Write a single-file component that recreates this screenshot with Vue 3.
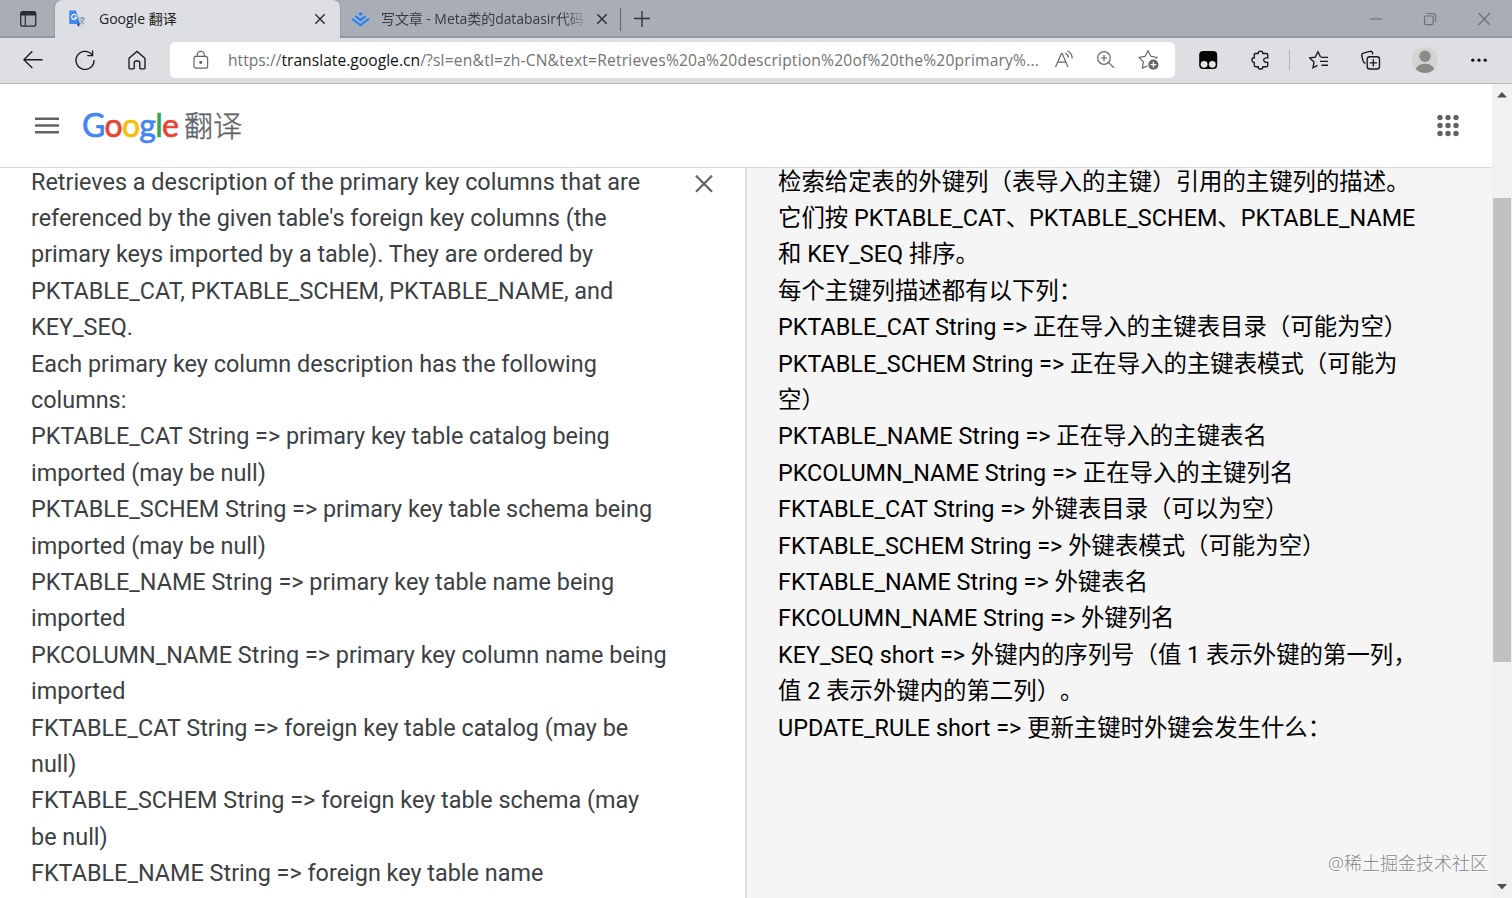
<script setup>
import { ref } from "vue";

const tabs = ref([
  { id: 1, title: "Google 翻译", active: true },
  { id: 2, title: "写文章 - Meta类的databasir代码", active: false },
]);

const logo = [
  { char: "G", color: "blue" },
  { char: "o", color: "red" },
  { char: "o", color: "yellow" },
  { char: "g", color: "blue" },
  { char: "l", color: "green" },
  { char: "e", color: "red" },
];

const sourceLines = ref([
  "Retrieves a description of the primary key columns that are",
  "referenced by the given table's foreign key columns (the",
  "primary keys imported by a table). They are ordered by",
  "PKTABLE_CAT, PKTABLE_SCHEM, PKTABLE_NAME, and",
  "KEY_SEQ.",
  "Each primary key column description has the following",
  "columns:",
  "PKTABLE_CAT String => primary key table catalog being",
  "imported (may be null)",
  "PKTABLE_SCHEM String => primary key table schema being",
  "imported (may be null)",
  "PKTABLE_NAME String => primary key table name being",
  "imported",
  "PKCOLUMN_NAME String => primary key column name being",
  "imported",
  "FKTABLE_CAT String => foreign key table catalog (may be",
  "null)",
  "FKTABLE_SCHEM String => foreign key table schema (may",
  "be null)",
  "FKTABLE_NAME String => foreign key table name",
]);

const targetLines = ref([
  "检索给定表的外键列（表导入的主键）引用的主键列的描述。",
  "它们按 PKTABLE_CAT、PKTABLE_SCHEM、PKTABLE_NAME",
  "和 KEY_SEQ 排序。",
  "每个主键列描述都有以下列：",
  "PKTABLE_CAT String => 正在导入的主键表目录（可能为空）",
  "PKTABLE_SCHEM String => 正在导入的主键表模式（可能为",
  "空）",
  "PKTABLE_NAME String => 正在导入的主键表名",
  "PKCOLUMN_NAME String => 正在导入的主键列名",
  "FKTABLE_CAT String => 外键表目录（可以为空）",
  "FKTABLE_SCHEM String => 外键表模式（可能为空）",
  "FKTABLE_NAME String => 外键表名",
  "FKCOLUMN_NAME String => 外键列名",
  "KEY_SEQ short => 外键内的序列号（值 1 表示外键的第一列，",
  "值 2 表示外键内的第二列）。",
  "UPDATE_RULE short => 更新主键时外键会发生什么：",
]);
</script>

<template>
  <div class="browser">
    <!-- Tabs -->
    <div class="tab-strip">
      <div class="tab-actions">
        <svg width="18" height="18" viewBox="0 0 18 18">
          <rect x="1.7" y="1.6" width="15" height="14.6" rx="2" fill="none" stroke="#2b2d31" stroke-width="1.3" />
          <path d="M1.7 5.4V3.6a2 2 0 0 1 2-2h11a2 2 0 0 1 2 2v1.8z" fill="#2b2d31" />
          <path d="M6.3 5v11" stroke="#2b2d31" stroke-width="1.2" />
        </svg>
      </div>
      <div v-for="tab in tabs" :key="tab.id" class="tab" :class="{ active: tab.active }">
        <svg v-if="tab.active" class="favicon" width="18" height="18" viewBox="0 0 18 18">
          <path d="M7 5h9.2a1 1 0 0 1 1 1v10.2a1 1 0 0 1-1 1H11z" fill="#d5d9e0" />
          <path d="M11.5 8.3h5M14 7v1.3m2 0c-.5 2.5-2 4.3-3.8 5.4m.2-3.6c.7 1.6 2 3 3.6 3.8" fill="none" stroke="#77818f" stroke-width=".9" />
          <path d="M2.2.5h5.6l4.4 13.5H2.2a1 1 0 0 1-1-1V1.5a1 1 0 0 1 1-1z" fill="#4285f4" />
          <path d="M8.6 13.5h3.6l-1.8 3.4z" fill="#4a3cae" />
          <path d="M8.3 5.6A2.5 2.5 0 1 0 8.6 7.3H6.4" fill="none" stroke="#fff" stroke-width="1.2" />
        </svg>
        <svg v-else class="favicon" width="20" height="18" viewBox="0 0 20 18">
          <path d="M9.5 2.1l2.3 1.8-2.3 1.8-2.3-1.8z" fill="#1e80ff" />
          <path d="M4.5 6.1l5 4 5-4M1.1 8.8l8.4 6.5 8.4-6.5" fill="none" stroke="#1e80ff" stroke-width="2" />
        </svg>
        <span class="tab-title">{{ tab.title }}</span>
        <svg class="tab-close" width="12" height="12" viewBox="0 0 12 12">
          <path d="M1.3 1.3l9.4 9.4M10.7 1.3l-9.4 9.4" stroke="currentColor" stroke-width="1.4" />
        </svg>
      </div>
      <div class="new-tab">
        <svg width="16" height="16" viewBox="0 0 16 16">
          <path d="M8 0v16M0 7.5h16" stroke="#303338" stroke-width="1.3" />
        </svg>
      </div>
      <div class="window-controls">
        <svg width="14" height="14" viewBox="0 0 14 14"><path d="M1 7h12" /></svg>
        <svg width="14" height="14" viewBox="0 0 14 14">
          <rect x="1.5" y="4" width="8.6" height="8.6" rx="1.4" />
          <path d="M4 1.5h6a2.5 2.5 0 0 1 2.5 2.5v6" />
        </svg>
        <svg width="14" height="14" viewBox="0 0 14 14"><path d="M1.5 1l11.5 12M13 1L1.5 13" /></svg>
      </div>
    </div>

    <!-- Toolbar -->
    <div class="toolbar">
      <div class="nav">
        <svg width="20" height="20" viewBox="0 0 20 20">
          <path d="M19.5 9.7H1M9.3 1.3L.9 9.7l8.4 8.4" />
        </svg>
        <svg width="20" height="20" viewBox="0 0 20 20">
          <path d="M17 4.7A9 9 0 1 0 19 10M17.6.6v5h-5.4" />
        </svg>
        <svg width="20" height="20" viewBox="0 0 20 20">
          <path d="M2 8.2L10 1.4l8 6.8V18a.8.8 0 0 1-.8.8h-3.6a.8.8 0 0 1-.8-.8v-5a2 2 0 0 0-2-2h-1.6a2 2 0 0 0-2 2v5a.8.8 0 0 1-.8.8H2.8A.8.8 0 0 1 2 18z" />
        </svg>
      </div>
      <div class="address">
        <svg class="lock" width="16" height="20" viewBox="0 0 16 20">
          <rect x="1" y="6.4" width="13.6" height="11.8" rx="2" />
          <path d="M4.2 6.2V5a3.6 3.6 0 0 1 7.2 0v1.2" />
          <circle cx="7.8" cy="12.3" r="1" fill="#666" />
        </svg>
        <div class="url">https://<b>translate.google.cn</b><span>/?sl=en&amp;tl=zh-CN&amp;text=Retrieves%20a%20description%20of%20the%20primary%...</span></div>
        <svg class="read" width="20" height="20" viewBox="0 0 20 20">
          <path d="M1.5 17L7.4 3.5h.8L14 17M3.6 12.2h8.3M11.5 3.1c1.7 1 2.7 2.4 2.8 4.5M13.3.8c3 1.5 4.8 4 4.9 7.6" />
        </svg>
        <svg class="zoom" width="20" height="20" viewBox="0 0 20 20">
          <circle cx="8" cy="8" r="6.3" />
          <path d="M12.6 12.6l5.3 5.2M8 4.8v6.4M4.8 8h6.4" />
        </svg>
        <svg class="fav" width="22" height="22" viewBox="0 0 22 22">
          <path d="M9.4 17l-4.9 2 .8-6.1L1.2 8.3l6-1L10 1.7l2.9 5.6 6 1-1.2 1.3" />
          <circle cx="15.4" cy="15.7" r="5.1" fill="#666" stroke="none" />
          <path d="M15.4 12.8v5.8M12.5 15.7h5.8" stroke="#fff" />
        </svg>
      </div>
      <div class="extensions">
        <svg class="i-monkey" width="20" height="20" viewBox="0 0 20 20">
          <rect x="1.2" y="1" width="18" height="18" rx="4" fill="#050505" stroke="none" />
          <circle cx="6.1" cy="14.3" r="3.4" fill="#e2e4e6" stroke="none" />
          <circle cx="14.3" cy="14.3" r="3.4" fill="#e2e4e6" stroke="none" />
        </svg>
        <svg class="i-puzzle" width="20" height="20" viewBox="0 0 20 20">
          <path d="M5.5 3.5h2.6a2.4 2.4 0 0 1 4.8 0h3.6a1.2 1.2 0 0 1 1.2 1.2v3.2c-2.4-.4-4 .6-4 2.2s1.6 2.6 4 2.2v3.2a1.2 1.2 0 0 1-1.2 1.2h-3.600a2.400 2.400 0 0 1-4.800 0H5.500a1.200 1.200 0 0 1-1.200-1.200v-3a2.400 2.400 0 0 1 0-4.800v-3a1.200 1.200 0 0 1 1.200-1.200z" />
        </svg>
        <span class="separator"></span>
        <svg class="i-favorites" width="20" height="20" viewBox="0 0 20 20">
          <path d="M8.5 15.3L4 17.8l1-5.8L.7 7.9l5.6-.8 2.6-5.3 2.7 5.3M12 7.3h7M11 11.3h8M12.5 15.2H19" />
        </svg>
        <svg class="i-collections" width="20" height="20" viewBox="0 0 20 20">
          <rect x="6.2" y="6.7" width="12.3" height="12.3" rx="2.5" />
          <path d="M12.35 9.3v7.2M8.75 12.9h7.2M4.5 13.5L3.3 12.6A3 3 0 0 1 2 10.8L.8 5.5A2 2 0 0 1 2.3 3.2L9 1.4a2 2 0 0 1 2.4 1.4l.4 1.5" />
        </svg>
        <svg class="i-avatar" width="26" height="26" viewBox="0 0 26 26">
          <circle cx="13" cy="13" r="13" fill="#d4d3d2" stroke="none" />
          <circle cx="13" cy="9.2" r="5.7" fill="#8c8a88" stroke="none" />
          <path d="M3.7 22c1.5-3.5 5-5.3 9.3-5.3s7.8 1.8 9.3 5.3C20 24.6 16.8 26 13 26s-7-1.4-9.3-4z" fill="#8c8a88" stroke="none" />
        </svg>
        <svg class="i-more" width="18" height="20" viewBox="0 0 18 20">
          <g fill="#111" stroke="none">
            <circle cx="2.8" cy="10.2" r="1.6" />
            <circle cx="9" cy="10.2" r="1.6" />
            <circle cx="15.2" cy="10.2" r="1.6" />
          </g>
        </svg>
      </div>
    </div>

    <!-- Page -->
    <div class="viewport">
      <div class="page">
        <header class="header">
          <svg class="menu" width="24" height="18" viewBox="0 0 24 18">
            <path d="M0 1.8h24M0 8.5h24M0 15.2h24" stroke="#5f6368" stroke-width="2.6" />
          </svg>
          <div class="logo">
            <span v-for="(l, i) in logo" :key="i" :class="l.color">{{ l.char }}</span>
          </div>
          <span class="product">翻译</span>
          <svg class="apps" width="22" height="22" viewBox="0 0 22 22">
            <template v-for="y in 3" :key="y">
              <circle v-for="x in 3" :key="x" :cx="x * 8 - 5" :cy="y * 8 - 5.5" r="2.7" fill="#5f6368" />
            </template>
          </svg>
        </header>
        <main class="panels">
          <section class="source">
            <div class="text">
              <p v-for="(line, i) in sourceLines" :key="i">{{ line }}</p>
            </div>
            <svg class="clear" width="18" height="18" viewBox="0 0 18 18">
              <path d="M1 .7l16 16M17 .7l-16 16" stroke="#5f6368" stroke-width="2.2" />
            </svg>
          </section>
          <section class="target">
            <div class="text">
              <p v-for="(line, i) in targetLines" :key="i">{{ line }}</p>
            </div>
            <span class="watermark">@稀土掘金技术社区</span>
          </section>
        </main>
      </div>
      <div class="scrollbar">
        <svg width="10" height="6" viewBox="0 0 10 6"><path d="M5 0l5 5.5H0z" fill="#505050" /></svg>
        <div class="thumb"></div>
        <svg class="down" width="10" height="6" viewBox="0 0 10 6"><path d="M5 5.5L10 0H0z" fill="#505050" /></svg>
      </div>
    </div>
  </div>
</template>

<style>
body {
  margin: 0;
  overflow: hidden;
}
</style>

<style scoped>
* {
  box-sizing: border-box;
}

.browser {
  display: flex;
  flex-direction: column;
  width: 1512px;
  height: 898px;
  overflow: hidden;
  background: #fff;
  font-family: "Open Sans", "Noto Sans CJK SC", sans-serif;
}

svg {
  display: block;
  flex: none;
}

/* Tabs */
.tab-strip {
  display: flex;
  flex: none;
  height: 38px;
  background: #a9aeb6;
  box-shadow: inset 0 -2px 1px #9197a0;
}

.tab-actions {
  width: 55px;
  padding: 10px 0 0 19px;
}

.tab {
  display: flex;
  align-items: center;
  width: 280px;
  padding: 0 12px 0 11px;
  font-size: 14px;
  color: #36393e;
}

.tab.active {
  width: 285px;
  padding: 0 14px 0 13px;
  background: #dddfe2;
  border-radius: 7px 7px 0 0;
  box-shadow: 0 0 2px #757b84;
  clip-path: inset(0 -3px 0 -3px);
  color: #222;
}

.tab-title {
  flex: 1;
  margin: 0 12px 0 13px;
  padding-bottom: 2px;
  overflow: hidden;
  white-space: nowrap;
}

.tab:not(.active) .tab-title {
  margin-left: 10px;
  letter-spacing: -0.07px;
  mask-image: linear-gradient(to right, #000 89%, rgba(0, 0, 0, 0.2));
}

.tab-close {
  color: #292b2f;
}

.new-tab {
  align-self: flex-start;
  height: 23px;
  margin-top: 8px;
  padding: 3px 0 0 13px;
  border-left: 1px solid #60656d;
}

.window-controls {
  display: flex;
  gap: 40px;
  margin-left: auto;
  padding: 12px 21px 0 0;
  fill: none;
  stroke: #6c7077;
  stroke-width: 1.2;
}

/* Toolbar */
.toolbar {
  display: flex;
  flex: none;
  align-items: center;
  height: 46px;
  padding-bottom: 1px;
  background: #dddfe2;
  border-bottom: 1px solid #b2b4b7;
}

.nav,
.extensions {
  display: flex;
  align-items: center;
  fill: none;
  stroke: #191919;
  stroke-width: 1.35;
}

.nav {
  gap: 32px;
  width: 170px;
  padding-left: 23px;
}

.address {
  display: flex;
  align-items: center;
  width: 1005px;
  height: 36px;
  padding-left: 23px;
  background: #fff;
  border-radius: 5px;
  fill: none;
  stroke: #666;
  stroke-width: 1.2;
}

.url {
  width: 826px;
  margin-left: 19px;
  font-size: 15.6px;
  letter-spacing: 0.03px;
  white-space: nowrap;
  color: #737373;
}

.url b {
  font-weight: 400;
  color: #111;
}

.url span {
  letter-spacing: 0.2px;
}

.zoom {
  margin-left: 22px;
}

.fav {
  margin-left: 22px;
}

.i-monkey {
  margin-left: 23px;
}

.i-puzzle {
  margin-left: 32px;
}

.separator {
  width: 1px;
  height: 20px;
  margin-left: 19px;
  background: #b0b2b5;
}

.i-favorites {
  margin-left: 19px;
}

.i-collections {
  margin-left: 32px;
}

.i-avatar {
  margin-left: 31px;
}

.i-more {
  margin-left: 32px;
}

/* Page */
.viewport {
  display: flex;
  flex: 1;
  min-height: 0;
}

.page {
  display: flex;
  flex-direction: column;
  width: 1492px;
}

.header {
  display: flex;
  flex: none;
  align-items: center;
  height: 84px;
  padding: 0 33px 0 35px;
  border-bottom: 1px solid #dadce0;
}

.logo {
  display: flex;
  width: 98px;
  margin-left: 23px;
  padding-bottom: 2px;
  font-family: Lato, sans-serif;
  font-size: 32px;
  line-height: 40px;
  letter-spacing: -0.8px;
  -webkit-text-stroke: 0.7px currentColor;
}

.blue {
  color: #4285f4;
}

.red {
  color: #ea4335;
}

.yellow {
  color: #fbbc05;
}

.green {
  color: #34a853;
}

.product {
  margin-left: 4px;
  padding-bottom: 4px;
  font-family: "Noto Sans CJK SC", sans-serif;
  font-size: 29px;
  font-weight: 300;
  line-height: 40px;
  color: #5f6368;
  -webkit-text-stroke: 0.4px currentColor;
}

.apps {
  margin-left: auto;
}

.panels {
  display: flex;
  flex: 1;
  min-height: 0;
}

.source,
.target {
  display: flex;
  overflow: hidden;
}

.source {
  justify-content: space-between;
  width: 745px;
  padding: 0 32px 0 31px;
}

.target {
  position: relative;
  width: 747px;
  padding-left: 31px;
  background: #f5f5f5;
  border-left: 2px solid #dfe0e2;
}

.text {
  margin-top: -4.3px;
  font-family: Roboto, "Noto Sans CJK SC", sans-serif;
  font-size: 23.4px;
  color: #3c4043;
}

.target .text {
  color: #000;
  text-spacing-trim: space-all;
}

.text p {
  height: 36.4px;
  margin: 0;
  line-height: 36.4px;
  white-space: nowrap;
}

.clear {
  margin-top: 7px;
}

.watermark {
  position: absolute;
  right: 4px;
  bottom: 22px;
  font-size: 18px;
  font-weight: 300;
  line-height: 26px;
  color: #858585;
  text-shadow: 1px 1px 0 #fff;
}

.scrollbar {
  display: flex;
  flex-direction: column;
  align-items: center;
  width: 20px;
  padding: 8px 0;
  background: #f1f1f1;
}

.thumb {
  width: 18px;
  height: 464px;
  margin-top: 100px;
  background: #c1c1c1;
}

.down {
  margin-top: auto;
}
</style>
